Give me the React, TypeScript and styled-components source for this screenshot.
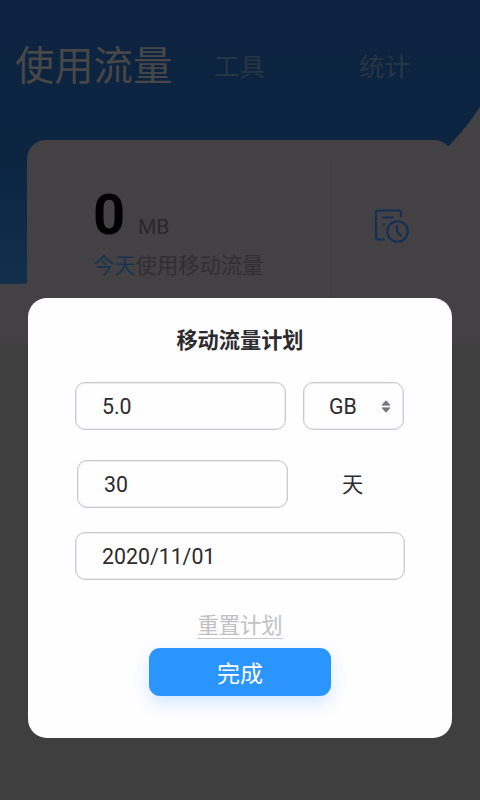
import React from "react";
import styled, { createGlobalStyle } from "styled-components";

const GlobalStyle = createGlobalStyle`
  * { box-sizing: border-box; }
  body { margin: 0; background: #403e40; }
  button, input { font: inherit; }
`;

const Screen = styled.div`
  position: relative;
  width: 480px;
  height: 800px;
  overflow: hidden;
  background: linear-gradient(#434143 0, #434143 340px, #3f3f40 345px);
  font-family: Roboto, "Noto Sans CJK SC", sans-serif;
`;

const Wave = styled.svg`
  position: absolute;
  inset: 0 auto auto 0;
`;

const Page = styled.main`
  position: relative;
  display: flex;
  flex-direction: column;
`;

const Tabs = styled.nav`
  display: flex;
  align-items: center;
  height: 140px;
  padding: 0 0 7px 15px;
`;

const Tab = styled.span<{ $active?: boolean; $width: number }>`
  flex: none;
  width: ${(p) => p.$width}px;
  font-size: ${(p) => (p.$active ? 39.3 : 25.5)}px;
  font-weight: 400;
  line-height: 48px;
  color: ${(p) => (p.$active ? "#484747" : "#263642")};
`;

const UsageCard = styled.section`
  display: flex;
  width: 426px;
  height: 200px;
  margin-left: 27px;
  border-radius: 19px 19px 0 0;
  background: #434143;
`;

const Usage = styled.div`
  width: 304px;
  padding: 42px 0 0 66px;
`;

const Amount = styled.div`
  display: flex;
  align-items: baseline;
  height: 68px;
  line-height: 66px;
`;

const Value = styled.span`
  width: 45px;
  font-size: 56px;
  font-weight: 700;
  color: #000;
`;

const Unit = styled.span`
  font-size: 21px;
  color: #29282a;
`;

const Caption = styled.div`
  font-size: 21.3px;
  line-height: 32px;
  color: #302f31;
  white-space: nowrap;
`;

const Today = styled.span`
  color: #17334e;
`;

const History = styled.div`
  width: 122px;
  height: 160px;
  margin-top: 20px;
  padding: 48px 0 0 42px;
  border-left: 1px solid #3e3d3f;
`;

const Dialog = styled.section`
  position: absolute;
  top: 298px;
  left: 28px;
  display: flex;
  flex-direction: column;
  align-items: flex-start;
  width: 424px;
  height: 440px;
  padding: 26px 47px 0;
  border-radius: 19px;
  background: #fefdff;
  color: #2c2b2d;
`;

const Title = styled.h2`
  align-self: stretch;
  height: 58px;
  margin: 0;
  font-size: 21.2px;
  font-weight: 700;
  line-height: 33px;
  text-align: center;
`;

const Row = styled.div<{ $gap: number; $indent?: number }>`
  display: flex;
  align-items: center;
  height: 48px;
  margin-bottom: ${(p) => p.$gap}px;
  margin-left: ${(p) => p.$indent ?? 0}px;
`;

const Field = styled.div<{ $width: number }>`
  display: flex;
  flex: none;
  align-items: center;
  justify-content: space-between;
  width: ${(p) => p.$width}px;
  height: 48px;
  padding: 1px 12px 0 26px;
  border: 1px solid #cbc9cd;
  box-shadow: inset 0 0 0 0.5px #dcdade;
  border-radius: 10px;
  font-size: 21.3px;
  line-height: 46px;
`;

const UnitField = styled(Field)`
  margin-left: 17px;
  padding-left: 25px;
`;

const Days = styled.span`
  margin-left: 54px;
  padding-top: 2px;
  font-size: 21.3px;
  line-height: 48px;
`;

const Reset = styled.button`
  align-self: center;
  height: 27px;
  padding: 0;
  border: 0;
  border-bottom: 1.5px solid #c9c8cb;
  background: none;
  color: #c1c0c3;
  font-size: 21.3px;
  line-height: 27px;
`;

const Done = styled.button`
  align-self: center;
  width: 182px;
  height: 48px;
  margin-top: 9px;
  padding: 4px 0 0;
  border: 0;
  border-radius: 11px;
  background: #2b95ff;
  box-shadow: 0 7px 15px rgba(43, 149, 255, 0.2);
  color: #fff;
  font-size: 23px;
  line-height: 46px;
`;

const HistoryIcon = () => (
  <svg width="36" height="36" viewBox="0 0 36 36" fill="none" stroke="#142f57" strokeWidth="2.1" strokeLinecap="round">
    <path d="M27 8.5V4.5q0-2-2-2H4q-2 0-2 2v25q0 2 2 2h6M9 9.5h10" />
    <circle cx="9.5" cy="16.5" r=".5" />
    <circle cx="23.5" cy="23.5" r="10.3" />
    <path d="M23 18v5.5l4 4" />
  </svg>
);

const Sorter = () => (
  <svg width="10" height="14" viewBox="0 0 10 14" fill="#777579">
    <path d="M1 5.2 4.3 1.2q.7-.8 1.4 0L9 5.2ZM1 7.8h8l-3.3 4q-.7.8-1.4 0Z" stroke="#777579" strokeWidth=".7" strokeLinejoin="round" />
  </svg>
);

export default function App() {
  return (
    <Screen>
      <GlobalStyle />
      <Wave width="480" height="290" viewBox="0 0 480 290">
        <defs>
          <linearGradient id="sea" x1="0" y1="0" x2="0" y2="1">
            <stop offset="0" stopColor="#0e2341" />
            <stop offset=".55" stopColor="#0b2541" />
            <stop offset="1" stopColor="#122f4b" />
          </linearGradient>
        </defs>
        <path d="M0 0H480V107C466 128 457 137 445 150C350 245 170 284 0 284Z" fill="url(#sea)" />
      </Wave>
      <Page>
        <Tabs>
          <Tab $active $width={199}>使用流量</Tab>
          <Tab $width={145}>工具</Tab>
          <Tab $width={80}>统计</Tab>
        </Tabs>
        <UsageCard>
          <Usage>
            <Amount>
              <Value>0</Value>
              <Unit>MB</Unit>
            </Amount>
            <Caption><Today>今天</Today>使用移动流量</Caption>
          </Usage>
          <History><HistoryIcon /></History>
        </UsageCard>
      </Page>
      <Dialog role="dialog" aria-label="移动流量计划">
        <Title>移动流量计划</Title>
        <Row $gap={30}>
          <Field $width={211}>5.0</Field>
          <UnitField $width={101}>GB<Sorter /></UnitField>
        </Row>
        <Row $gap={24} $indent={2}>
          <Field $width={211}>30</Field>
          <Days>天</Days>
        </Row>
        <Row $gap={32}>
          <Field $width={330}>2020/11/01</Field>
        </Row>
        <Reset>重置计划</Reset>
        <Done>完成</Done>
      </Dialog>
    </Screen>
  );
}
